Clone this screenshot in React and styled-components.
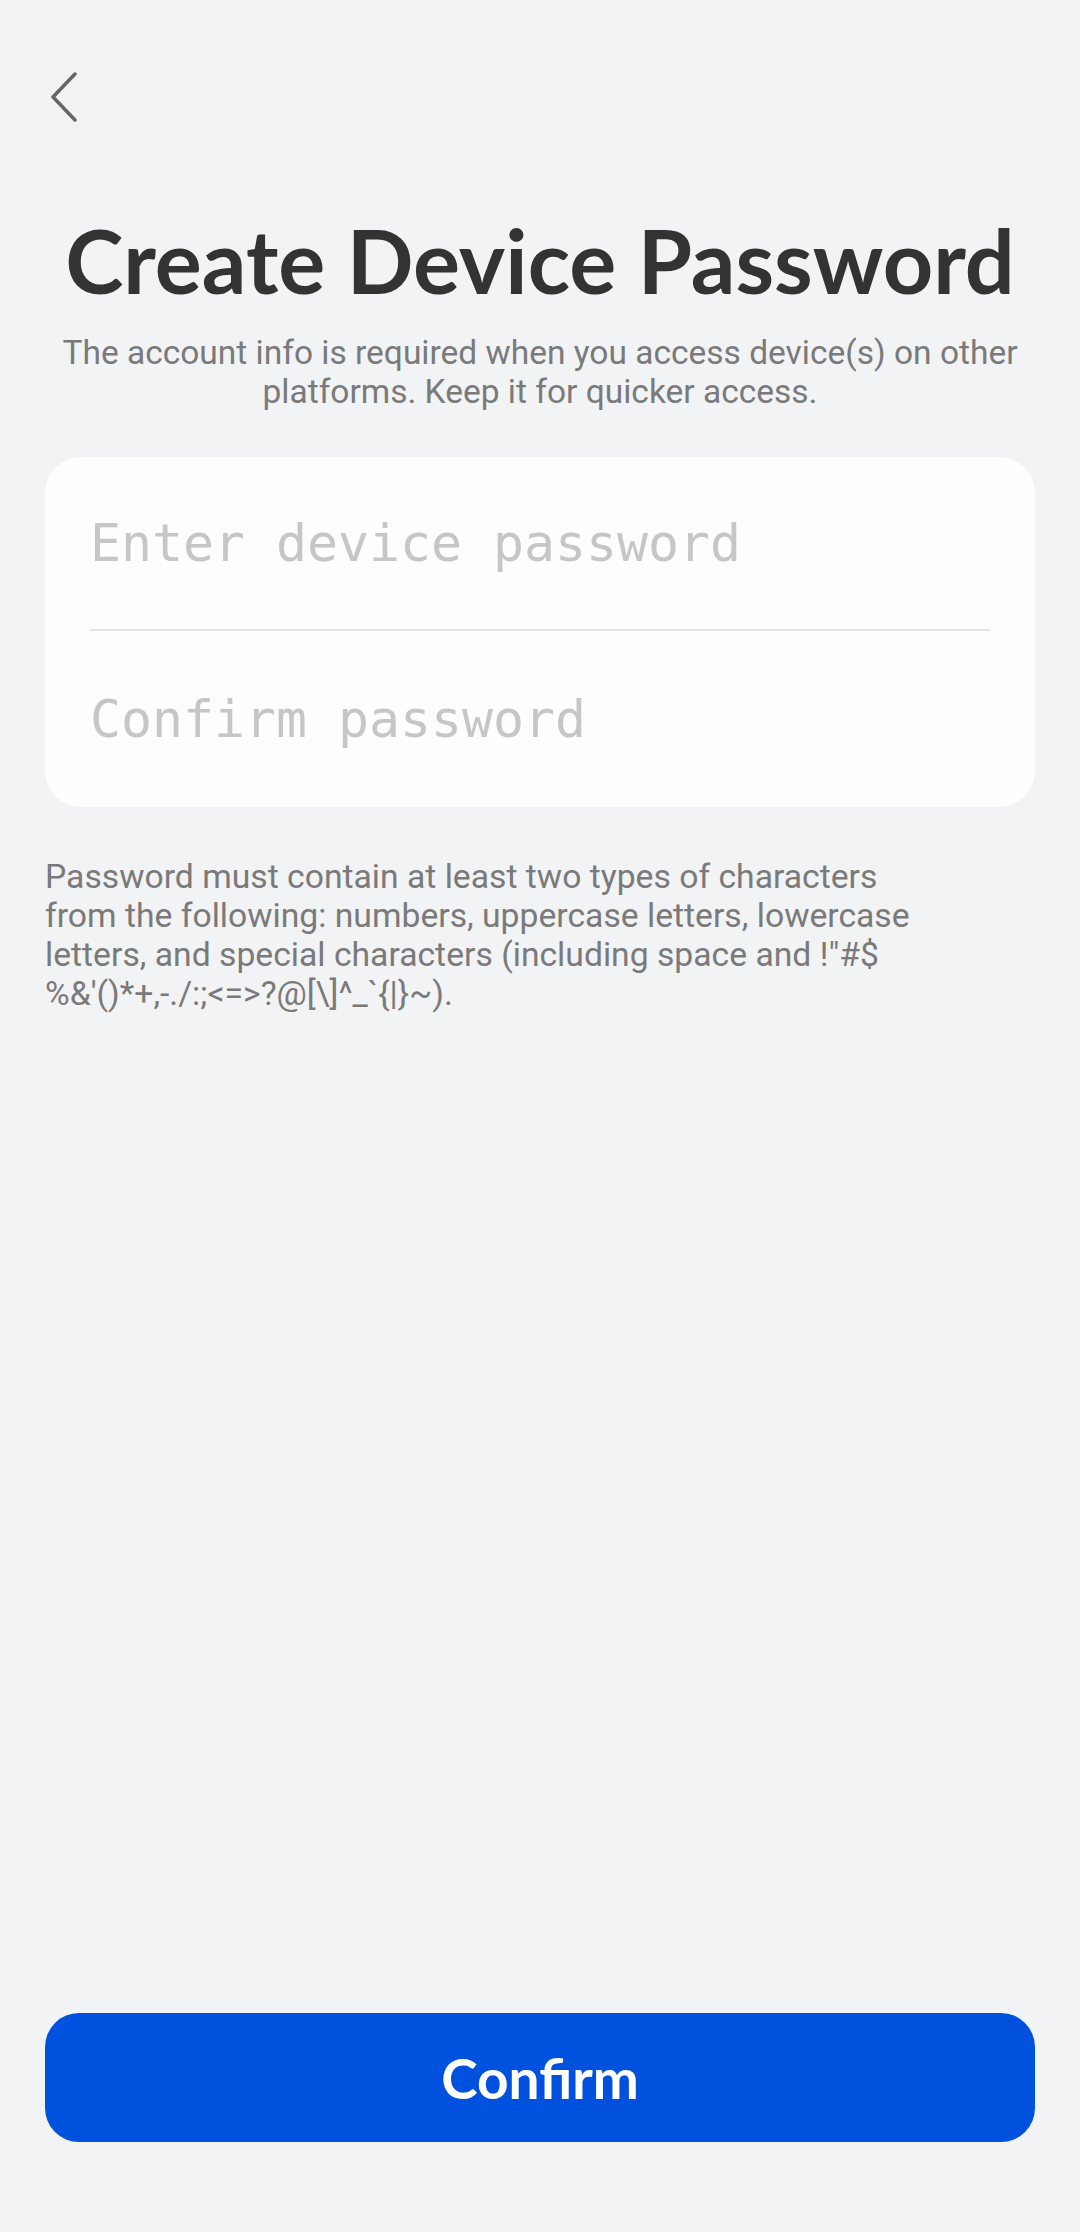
import React from "react";
import styled, { createGlobalStyle } from "styled-components";

const Global = createGlobalStyle`
  html, body { margin: 0; padding: 0; background: #f2f3f5; }
  * { box-sizing: border-box; }
`;

const Page = styled.div`
  min-height: 2232px;
  display: flex;
  flex-direction: column;
  background: #f2f3f5;
  padding: 0 45px 90px;
  font-family: Roboto, "Noto Sans", sans-serif;
`;

const TopBar = styled.div`
  height: 210px;
  display: flex;
  align-items: flex-start;
  padding-top: 72px;
`;

const BackButton = styled.button`
  border: 0;
  background: transparent;
  padding: 0;
  margin-left: 4px;
  width: 30px;
  height: 50px;
  display: flex;
  cursor: pointer;
`;

const Title = styled.h1`
  margin: 0;
  text-align: center;
  font-family: Lato, "Noto Sans", sans-serif;
  font-weight: 700;
  font-size: 88px;
  line-height: 100px;
  letter-spacing: 0;
  color: #333333;
`;

const Subtitle = styled.p`
  margin: 23px 0 0;
  text-align: center;
  font-size: 33.5px;
  line-height: 39px;
  color: #7a7a7a;
`;

const Card = styled.div`
  margin-top: 46px;
  background: #fdfdfd;
  border-radius: 36px;
  padding: 0 45px;
  display: flex;
  flex-direction: column;
`;

const Field = styled.input`
  height: ${(p) => p.$h}px;
  border: 0;
  outline: none;
  background: transparent;
  padding: 0;
  font-family: "DejaVu Sans Mono", "Liberation Mono", monospace;
  font-size: 51.5px;
  color: #333;
  border-bottom: ${(p) => (p.$divider ? "2px solid #e3e3e3" : "0")};
  &::placeholder { color: #c6c6c6; }
`;

const Hint = styled.p`
  margin: 50px 0 0;
  font-size: 33.7px;
  line-height: 39px;
  color: #7a7a7a;
`;

const Line = styled.span`
  display: block;
  white-space: nowrap;
`;

const ConfirmButton = styled.button`
  margin-top: auto;
  height: 129px;
  border: 0;
  border-radius: 34px;
  background: #0052de;
  color: #ffffff;
  font-family: Lato, "Noto Sans", sans-serif;
  font-weight: 700;
  font-size: 55px;
  cursor: pointer;
`;

export default function App() {
  return (
    <>
      <Global />
      <Page>
        <TopBar>
          <BackButton aria-label="Back">
            <svg width="30" height="50" viewBox="0 0 30 50" fill="none">
              <path d="M26 2 L4 25 L26 48" stroke="#666666" strokeWidth="3.5" strokeLinecap="round" strokeLinejoin="round" />
            </svg>
          </BackButton>
        </TopBar>
        <Title>Create Device Password</Title>
        <Subtitle>
          The account info is required when you access device(s) on other
          <br />
          platforms. Keep it for quicker access.
        </Subtitle>
        <Card>
          <Field type="password" placeholder="Enter device password" $h={174} $divider />
          <Field type="password" placeholder="Confirm password" $h={176} />
        </Card>
        <Hint>
          <Line>Password must contain at least two types of characters</Line>
          <Line>from the following: numbers, uppercase letters, lowercase</Line>
          <Line>letters, and special characters (including space and !"#$</Line>
          <Line>%&amp;'()*+,-./:;&lt;=&gt;?@[\]^_`{"{"}|{"}"}~).</Line>
        </Hint>
        <ConfirmButton>Confirm</ConfirmButton>
      </Page>
    </>
  );
}
